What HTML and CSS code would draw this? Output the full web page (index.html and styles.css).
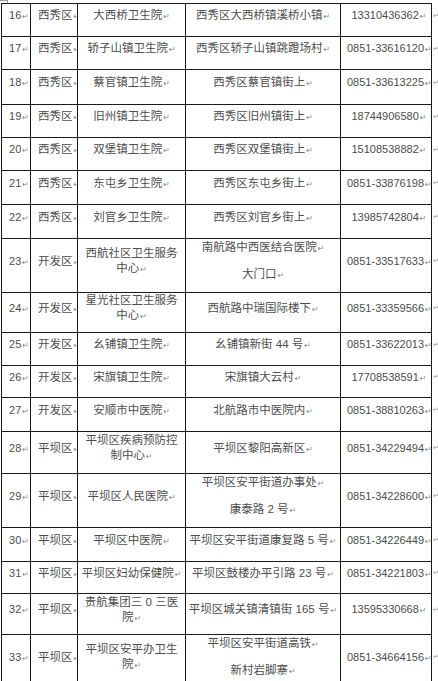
FILE: index.html
```html
<!DOCTYPE html>
<html lang="zh-CN">
<head>
<meta charset="utf-8">
<title>医疗机构名单</title>
<link rel="stylesheet" href="styles.css">
</head>
<body>
<span class="handle"></span>
<table class="list">
  <colgroup>
    <col class="c-no"><col class="c-area"><col class="c-name"><col class="c-addr"><col class="c-tel"><col class="c-eor">
  </colgroup>
  <tbody>
    <tr class="h33"><td class="no">16<i>↵</i></td><td class="area">西秀区<i>↵</i></td><td class="name">大西桥卫生院<i>↵</i></td><td class="addr">西秀区大西桥镇溪桥小镇<i>↵</i></td><td class="tel">13310436362<i>↵</i></td><td class="eor">↵</td></tr>
    <tr class="h33"><td class="no">17<i>↵</i></td><td class="area">西秀区<i>↵</i></td><td class="name">轿子山镇卫生院<i>↵</i></td><td class="addr">西秀区轿子山镇跳蹬场村<i>↵</i></td><td class="tel">0851-33616120<i>↵</i></td><td class="eor">↵</td></tr>
    <tr class="h35"><td class="no">18<i>↵</i></td><td class="area">西秀区<i>↵</i></td><td class="name">蔡官镇卫生院<i>↵</i></td><td class="addr">西秀区蔡官镇街上<i>↵</i></td><td class="tel">0851-33613225<i>↵</i></td><td class="eor">↵</td></tr>
    <tr class="h33"><td class="no">19<i>↵</i></td><td class="area">西秀区<i>↵</i></td><td class="name">旧州镇卫生院<i>↵</i></td><td class="addr">西秀区旧州镇街上<i>↵</i></td><td class="tel">18744906580<i>↵</i></td><td class="eor">↵</td></tr>
    <tr class="h33"><td class="no">20<i>↵</i></td><td class="area">西秀区<i>↵</i></td><td class="name">双堡镇卫生院<i>↵</i></td><td class="addr">西秀区双堡镇街上<i>↵</i></td><td class="tel">15108538882<i>↵</i></td><td class="eor">↵</td></tr>
    <tr class="h34"><td class="no">21<i>↵</i></td><td class="area">西秀区<i>↵</i></td><td class="name">东屯乡卫生院<i>↵</i></td><td class="addr">西秀区东屯乡街上<i>↵</i></td><td class="tel">0851-33876198<i>↵</i></td><td class="eor">↵</td></tr>
    <tr class="h34"><td class="no">22<i>↵</i></td><td class="area">西秀区<i>↵</i></td><td class="name">刘官乡卫生院<i>↵</i></td><td class="addr">西秀区刘官乡街上<i>↵</i></td><td class="tel">13985742804<i>↵</i></td><td class="eor">↵</td></tr>
    <tr class="h50"><td class="no">23<i>↵</i></td><td class="area">开发区<i>↵</i></td><td class="name">西航社区卫生服务<br>中心<i>↵</i></td><td class="addr"><p>南航路中西医结合医院<i>↵</i></p><p>大门口<i>↵</i></p></td><td class="tel">0851-33517633<i>↵</i></td><td class="eor">↵</td></tr>
    <tr class="h40"><td class="no">24<i>↵</i></td><td class="area">开发区<i>↵</i></td><td class="name">星光社区卫生服务<br>中心<i>↵</i></td><td class="addr">西航路中瑞国际楼下<i>↵</i></td><td class="tel">0851-33359566<i>↵</i></td><td class="eor">↵</td></tr>
    <tr class="h33"><td class="no">25<i>↵</i></td><td class="area">开发区<i>↵</i></td><td class="name">幺铺镇卫生院<i>↵</i></td><td class="addr">幺铺镇新街 44 号<i>↵</i></td><td class="tel">0851-33622013<i>↵</i></td><td class="eor">↵</td></tr>
    <tr class="h32"><td class="no">26<i>↵</i></td><td class="area">开发区<i>↵</i></td><td class="name">宋旗镇卫生院<i>↵</i></td><td class="addr">宋旗镇大云村<i>↵</i></td><td class="tel">17708538591<i>↵</i></td><td class="eor">↵</td></tr>
    <tr class="h34"><td class="no">27<i>↵</i></td><td class="area">开发区<i>↵</i></td><td class="name">安顺市中医院<i>↵</i></td><td class="addr">北航路市中医院内<i>↵</i></td><td class="tel">0851-38810263<i>↵</i></td><td class="eor">↵</td></tr>
    <tr class="h42"><td class="no">28<i>↵</i></td><td class="area">平坝区<i>↵</i></td><td class="name">平坝区疾病预防控<br>制中心<i>↵</i></td><td class="addr">平坝区黎阳高新区<i>↵</i></td><td class="tel">0851-34229494<i>↵</i></td><td class="eor">↵</td></tr>
    <tr class="h50"><td class="no">29<i>↵</i></td><td class="area">平坝区<i>↵</i></td><td class="name">平坝区人民医院<i>↵</i></td><td class="addr"><p>平坝区安平街道办事处<i>↵</i></p><p>康泰路 2 号<i>↵</i></p></td><td class="tel">0851-34228600<i>↵</i></td><td class="eor">↵</td></tr>
    <tr class="h34"><td class="no">30<i>↵</i></td><td class="area">平坝区<i>↵</i></td><td class="name">平坝区中医院<i>↵</i></td><td class="addr">平坝区安平街道康复路 5 号<i>↵</i></td><td class="tel">0851-34226449<i>↵</i></td><td class="eor">↵</td></tr>
    <tr class="h32"><td class="no">31<i>↵</i></td><td class="area">平坝区<i>↵</i></td><td class="name">平坝区妇幼保健院<i>↵</i></td><td class="addr">平坝区鼓楼办平引路 23 号<i>↵</i></td><td class="tel">0851-34221803<i>↵</i></td><td class="eor">↵</td></tr>
    <tr class="h41"><td class="no">32<i>↵</i></td><td class="area">平坝区<i>↵</i></td><td class="name">贵航集团三 0 三医<br>院<i>↵</i></td><td class="addr">平坝区城关镇清镇街 165 号<i>↵</i></td><td class="tel">13595330668<i>↵</i></td><td class="eor">↵</td></tr>
    <tr class="h51"><td class="no">33<i>↵</i></td><td class="area">平坝区<i>↵</i></td><td class="name">平坝区安平办卫生<br>院<i>↵</i></td><td class="addr"><p>平坝区安平街道高铁<i>↵</i></p><p>新村岩脚寨<i>↵</i></p></td><td class="tel">0851-34664156<i>↵</i></td><td class="eor">↵</td></tr>
  </tbody>
</table>
</body>
</html>
```

FILE: styles.css
```css
html, body {
  margin: 0;
  padding: 0;
  background: #ffffff;
}

body {
  position: relative;
  width: 438px;
  height: 681px;
  overflow: hidden;
  font-family: "Liberation Sans", "Noto Sans CJK SC", sans-serif;
  font-size: 11.5px;
  color: #4d4d4d;
}

.handle {
  position: absolute;
  left: 0;
  top: 0;
  width: 8px;
  height: 3px;
  border-top: 1px solid #999;
  border-right: 1px solid #999;
  box-sizing: border-box;
}

.list {
  margin: 3px 0 0 1px;
  border-collapse: collapse;
  table-layout: fixed;
  width: 437px;
}

.c-no { width: 29px; }
.c-area { width: 47px; }
.c-name { width: 108px; }
.c-addr { width: 155px; }
.c-tel { width: 91px; }
.c-eor { width: 7px; }

.list td {
  border: 1px solid #1a1a1a;
  padding: 0 0 8px 0;
  vertical-align: middle;
  white-space: nowrap;
  overflow: hidden;
  line-height: 15px;
}

.list td.eor {
  border: none;
  font-family: "DejaVu Sans", sans-serif;
  font-size: 7px;
  color: #999;
  padding-left: 1px;
}

.list i {
  font-style: normal;
  font-family: "DejaVu Sans", sans-serif;
  font-size: 8px;
  color: #888;
  margin-left: 1px;
}

.no {
  text-align: right;
  padding-right: 1px !important;
  font-size: 11px;
}

.area {
  text-align: left;
  padding-left: 7px !important;
}

.name {
  text-align: center;
}

.addr {
  text-align: center;
}

.addr p {
  margin: 0;
  line-height: 16px;
}

.addr p + p {
  margin-top: 9px;
}

.tel {
  text-align: center;
  padding-left: 6px !important;
  font-size: 11px;
}

.h32 { height: 32px; }
.h33 { height: 33px; }
.h34 { height: 34px; }
.h35 { height: 35px; }
.h40 { height: 40px; }
.h41 { height: 41px; }
.h42 { height: 42px; }
.h50 { height: 50px; }
.h51 { height: 51px; }
```
